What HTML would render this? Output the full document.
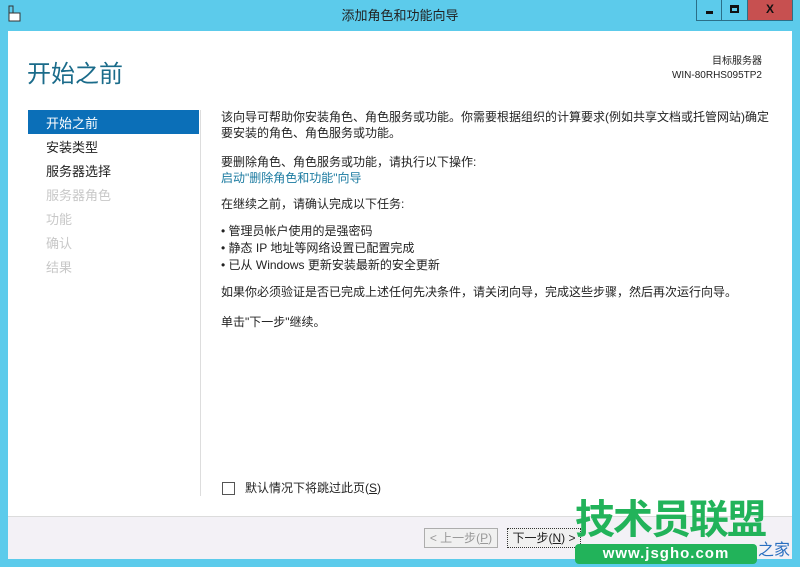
<!DOCTYPE html>
<html><head><meta charset="utf-8"><style>
*{margin:0;padding:0;box-sizing:border-box}
body{width:800px;height:567px;background:#5ccbeb;position:relative;overflow:hidden;font-family:"Liberation Sans","Noto Sans CJK SC",sans-serif;font-size:12px;color:#222}
.a{position:absolute;white-space:nowrap}
#title{left:0;top:0;width:800px;height:31px;text-align:center;line-height:31px;font-size:13px;color:#222}
#main{position:absolute;left:8px;top:31px;width:784px;height:485px;background:#fff}
#foot{position:absolute;left:8px;top:516px;width:784px;height:43px;background:#f3f1f6;border-top:1px solid #dcdcdc}
.t{font-size:12px;line-height:16px}
.nav{font-size:13px;left:46px}
.btn{position:absolute;height:20px;border:1px solid #adadad;background:#f0f0f0;font-size:12px;line-height:18px;text-align:center}
</style></head><body>
<div class="a" id="title">添加角色和功能向导</div>
<svg class="a" style="left:8px;top:5px" width="14" height="18"><rect x="1" y="1" width="4" height="8" fill="none" stroke="#333"/><rect x="1" y="8" width="11" height="8" fill="#fff" stroke="#333"/></svg>
<div class="a" style="left:696px;top:0;width:26px;height:21px;background:#5ccbeb;border:1px solid #2b6f88;border-top:0"><div style="position:absolute;left:9px;top:11px;width:7px;height:3px;background:#111"></div></div>
<div class="a" style="left:722px;top:0;width:26px;height:21px;background:#5ccbeb;border:1px solid #2b6f88;border-top:0;border-left:0"><div style="position:absolute;left:8px;top:5px;width:9px;height:8px;border:2px solid #111;border-top-width:3px"></div></div>
<div class="a" style="left:748px;top:0;width:45px;height:21px;background:#c75050;border:1px solid #2b6f88;border-top:0;border-left:0;color:#111;font-weight:bold;text-align:center;line-height:19px;font-size:12px">X</div>
<div id="main"></div>
<div id="foot"></div>
<div class="a" style="left:27px;top:54px;font-size:24px;color:#1a6b8a">开始之前</div>
<div class="a" style="right:38px;top:55px;font-size:10px;text-align:right;line-height:14px">目标服务器<br>WIN-80RHS095TP2</div>
<div class="a" style="left:28px;top:110px;width:171px;height:24px;background:#0b6fb8"></div>
<div class="a nav" style="top:113px;color:#fff">开始之前</div>
<div class="a nav" style="top:137px">安装类型</div>
<div class="a nav" style="top:161px">服务器选择</div>
<div class="a nav" style="top:185px;color:#c8c8c8">服务器角色</div>
<div class="a nav" style="top:209px;color:#c8c8c8">功能</div>
<div class="a nav" style="top:233px;color:#c8c8c8">确认</div>
<div class="a nav" style="top:257px;color:#c8c8c8">结果</div>
<div class="a" style="left:200px;top:110px;width:1px;height:386px;background:#ddd"></div>
<div class="a t" style="left:221px;top:109px">该向导可帮助你安装角色、角色服务或功能。你需要根据组织的计算要求(例如共享文档或托管网站)确定<br>要安装的角色、角色服务或功能。</div>
<div class="a t" style="left:221px;top:154px">要删除角色、角色服务或功能，请执行以下操作:<br><span style="color:#1a7aa0">启动"删除角色和功能"向导</span></div>
<div class="a t" style="left:221px;top:196px">在继续之前，请确认完成以下任务:</div>
<div class="a t" style="left:221px;top:223px;line-height:17px">• 管理员帐户使用的是强密码<br>• 静态 IP 地址等网络设置已配置完成<br>• 已从 Windows 更新安装最新的安全更新</div>
<div class="a t" style="left:221px;top:284px">如果你必须验证是否已完成上述任何先决条件，请关闭向导，完成这些步骤，然后再次运行向导。</div>
<div class="a t" style="left:221px;top:314px">单击"下一步"继续。</div>
<div class="a" style="left:222px;top:482px;width:13px;height:13px;border:1px solid #555"></div>
<div class="a t" style="left:245px;top:480px">默认情况下将跳过此页(<u>S</u>)</div>
<div class="btn" style="left:424px;top:528px;width:74px;color:#999">&lt; 上一步(<u>P</u>)</div>
<div class="btn" style="left:507px;top:528px;width:74px;border:1px dotted #333">下一步(<u>N</u>) &gt;</div>
<div class="a" style="left:575px;top:498px;font-size:40px;font-weight:bold;color:#22b35a;letter-spacing:-2px;line-height:44px">技术员联盟</div>
<div class="a" style="left:575px;top:544px;width:182px;height:20px;background:#22b35a;border-radius:4px;color:#fff;font-weight:bold;font-size:15px;text-align:center;line-height:20px;letter-spacing:1px">www.jsgho.com</div>
<div class="a" style="left:758px;top:536px;font-size:16px;color:#2a6fc0">之家</div>
</body></html>
